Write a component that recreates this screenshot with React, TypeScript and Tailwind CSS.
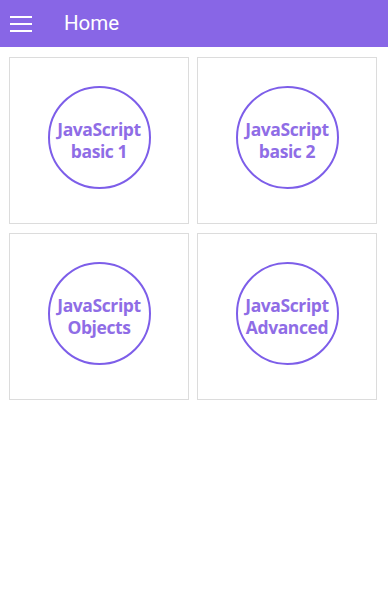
const topics = [
  ["JavaScript", "basic 1"],
  ["JavaScript", "basic 2"],
  ["JavaScript", "Objects"],
  ["JavaScript", "Advanced"],
];

export default function App() {
  return (
    <div className="min-h-screen bg-white font-['Roboto',sans-serif]">
      <header className="flex h-[47px] items-center bg-[#8866e6] text-white">
        <button className="ml-[10px] flex w-[22px] flex-col gap-[5px]" aria-label="menu">
          <span className="h-[2px] w-full bg-white" />
          <span className="h-[2px] w-full bg-white" />
          <span className="h-[2px] w-full bg-white" />
        </button>
        <h1 className="ml-[32px] text-[20.5px] leading-none">Home</h1>
      </header>

      <div className="grid grid-cols-[180px_180px] gap-x-[8px] gap-y-[9px] pl-[9px] pt-[10px]">
        {topics.map(([a, b]) => (
          <div
            key={b}
            className="flex h-[167px] items-center justify-center border border-[#dcdcdc] pb-[6px]"
          >
            <div className="flex h-[103px] w-[103px] flex-col items-center justify-center rounded-full border-2 border-[#7d5ee9] pt-[4px] text-[#8f6de6] font-['Open_Sans',sans-serif] text-[17.5px] font-bold leading-[22px] tracking-[-0.4px]">
              <span className="whitespace-nowrap">{a}</span>
              <span className="whitespace-nowrap">{b}</span>
            </div>
          </div>
        ))}
      </div>
    </div>
  );
}
